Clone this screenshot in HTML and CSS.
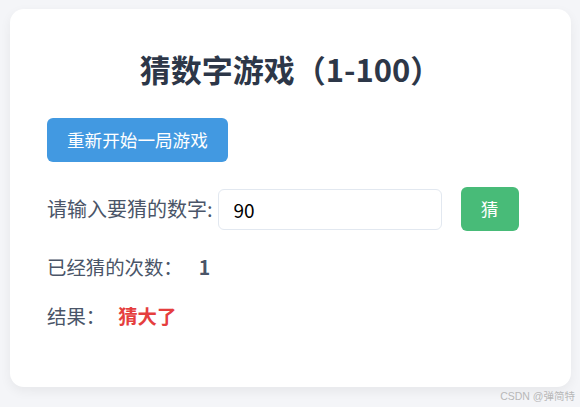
FILE: index.html
```html
<!DOCTYPE html>
<html lang="zh-CN">
<head>
<meta charset="utf-8">
<title>猜数字游戏</title>
<link rel="stylesheet" href="styles.css">
</head>
<body>
<div class="card">
  <h1 class="title">猜数字游戏（1-100）</h1>
  <button class="btn btn-blue">重新开始一局游戏</button>
  <div class="input-row">
    <label class="label" for="guess">请输入要猜的数字:</label>
    <input id="guess" class="guess-input" type="text" value="90">
    <button class="btn btn-green">猜</button>
  </div>
  <div class="info-row">已经猜的次数：<span class="count">1</span></div>
  <div class="info-row">结果：<span class="result">猜大了</span></div>
</div>
<div class="watermark">CSDN @弹简特</div>
</body>
</html>
```
FILE: styles.css
```css
html, body {
  margin: 0;
  padding: 0;
}
body {
  background: #f4f5f8;
  font-family: "Noto Sans CJK SC", "Noto Sans", sans-serif;
  padding: 9px 9px 0 10px;
  height: 407px;
  box-sizing: border-box;
  position: relative;
  overflow: hidden;
}
.card {
  background: #ffffff;
  border-radius: 14px;
  box-shadow: 0 4px 12px rgba(0, 0, 0, 0.06);
  padding: 41px 37px 0 37px;
  height: 378px;
  box-sizing: border-box;
}
.title {
  margin: 0;
  text-align: center;
  font-size: 31px;
  line-height: 38px;
  font-weight: 700;
  color: #2d3748;
}
.btn {
  border: none;
  border-radius: 6px;
  color: #ffffff;
  font-family: inherit;
  font-size: 17.6px;
  line-height: 24px;
  height: 44px;
  padding: 0 20px;
  cursor: pointer;
}
.btn-blue {
  background: #4299e1;
  margin-top: 30px;
  display: block;
}
.btn-green {
  background: #48bb78;
  margin-left: 19px;
  width: 58px;
  padding: 0;
}
.input-row {
  display: flex;
  align-items: center;
  margin-top: 25px;
  height: 44px;
}
.label {
  font-size: 20px;
  line-height: 28px;
  color: #4a5568;
  margin-right: 5px;
}
.guess-input {
  width: 224px;
  height: 41px;
  box-sizing: border-box;
  border: 1px solid #e2e8f0;
  border-radius: 6px;
  padding: 0 15px;
  font-family: inherit;
  font-size: 19px;
  color: #000000;
  outline: none;
}
.info-row {
  font-size: 19.4px;
  line-height: 28px;
  color: #4a5568;
  margin-top: 22px;
}
.info-row + .info-row {
  margin-top: 21px;
}
.count {
  font-weight: 700;
  margin-left: 16px;
}
.result {
  font-weight: 700;
  color: #e53e3e;
  margin-left: 13px;
}
.watermark {
  position: absolute;
  right: 5px;
  bottom: 4px;
  font-size: 10.5px;
  line-height: 14px;
  color: #b8b8b8;
  font-family: "Liberation Sans", "Noto Sans CJK SC", sans-serif;
}
```
